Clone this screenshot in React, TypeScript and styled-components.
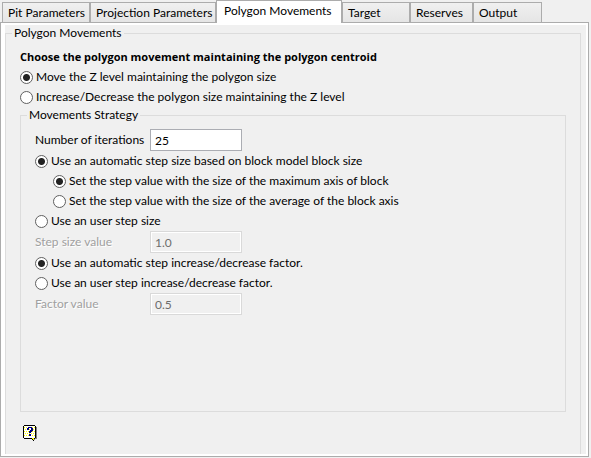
import React, { useState } from "react";
import styled, { createGlobalStyle, css } from "styled-components";

const GlobalStyle = createGlobalStyle`
  * { box-sizing: border-box; }
  body {
    margin: 0;
    background: #f0f0f0;
    color: #000;
    font-family: Lato, "Segoe UI", sans-serif;
    font-size: 12px;
    line-height: 16px;
  }
`;

const Page = styled.main`
  display: flex;
  flex-direction: column;
  min-height: 100vh;
  padding: 0 2px 1px 0;
`;

const TabBar = styled.div`
  display: flex;
  align-items: flex-end;
  height: 23px;
  padding-left: 2px;
  white-space: nowrap;
`;

const Tab = styled.button<{ $active: boolean; $width: number }>`
  flex: 0 0 ${(p) => p.$width}px;
  min-width: 0;
  height: 21px;
  padding: 0 0 0 5px;
  border: 1px solid #acacac;
  background: linear-gradient(#f0f0f0, #e5e5e5);
  font: inherit;
  color: inherit;
  text-align: left;
  ${(p) =>
    p.$active &&
    css`
      z-index: 1;
      height: 23px;
      padding: 0 0 2px 7px;
      border-bottom: 0;
      background: #fff;
    `}
`;

const Panel = styled.div`
  flex: 1;
  display: flex;
  flex-direction: column;
  margin-top: -1px;
  padding: 2px 2px 2px 4px;
  border: 1px solid #acacac;
  background: #fff;
`;

const PanelBody = styled.div`
  flex: 1;
  display: flex;
  flex-direction: column;
  padding-right: 5px;
  background: #f0f0f0;
`;

const Group = styled.fieldset`
  min-width: 0;
  margin: 0;
  padding: 6px 14px 0;
  border: 1px solid #dcdcdc;
`;

const OuterGroup = styled(Group)`
  flex: 1;
  border-bottom: 0;
`;

const InnerGroup = styled(Group)`
  padding-bottom: 96px;
`;

const Legend = styled.legend`
  margin-left: -8px;
  padding: 0 2px;
`;

const Heading = styled.h2`
  margin: 0;
  font-family: "Open Sans", "Segoe UI", sans-serif;
  font-size: 11px;
  font-weight: 700;
  line-height: 20px;
`;

const Option = styled.label<{ $nested?: boolean }>`
  display: flex;
  align-items: center;
  gap: 3px;
  height: 20px;
  padding-left: ${(p) => (p.$nested ? 18 : 0)}px;
  white-space: nowrap;
`;

const Radio = styled.input.attrs({ type: "radio" })`
  appearance: none;
  flex: none;
  width: 13px;
  height: 13px;
  margin: 0;
  border: 1px solid #606060;
  border-radius: 50%;
  background: #fff;
  &:checked {
    background: radial-gradient(circle, #222 0 3px, #fff 4px);
  }
`;

const Field = styled.div`
  display: grid;
  grid-template-columns: 115px 92px;
  align-items: center;
  height: 22px;
`;

const FieldLabel = styled.label<{ $disabled?: boolean }>`
  white-space: nowrap;
  ${(p) =>
    p.$disabled &&
    css`
      color: #a0a0a0;
      text-shadow: 1px 1px 0 #fff;
    `}
`;

const TextBox = styled.input`
  width: 100%;
  height: 22px;
  padding: 0 4px;
  border: 1px solid #abadb3;
  border-radius: 0;
  background: #fff;
  color: #000;
  font: inherit;
  &:disabled {
    border-color: #d9d9d9;
    background: #f0f0f0;
    box-shadow: inset 0 0 0 1px #fff;
    color: #6d6d6d;
  }
`;

const Footer = styled.div`
  display: flex;
  padding: 13px 3px 8px;
`;

const HelpButton = styled.button`
  display: block;
  padding: 0;
  border: 0;
  background: none;
  svg { display: block; }
`;

const dots = Array.from({ length: 11 }, (_, y) =>
  Array.from({ length: 11 }, (_, x) => [x + 1, y + 1]),
)
  .flat()
  .filter(([x, y]) => y % 2 === 0 && (x + y / 2) % 2 === 0);

const HelpIcon = () => (
  <svg width="14" height="16" viewBox="0 0 14 16" shapeRendering="crispEdges" aria-hidden="true">
    <path d="M13 2h1v12h-2v1h-1v1h-1v-2H2v-1h11z" fill="#808080" />
    <path d="M1 0h11v1h1v12h-1v1h-1v2h-1v-1H9v-1H1v-1H0V1h1z" fill="#000" />
    <path d="M1 1h11v12H1z" fill="#fff" />
    {dots.map(([x, y]) => (
      <rect key={`${x}-${y}`} x={x} y={y} width="1" height="1" fill="#ffff00" />
    ))}
    <path d="M1 13h8v1H1zM11 13h1v1h-1z" fill="#000" />
    <path d="M9 13h2v1H9zM10 14h1v1h-1z" fill="#ffff00" />
    <path d="M5 2h4v1h1v3H9v1H8v1H6V6h1V5h1V3H6v2H4V3h1zM6 9h2v2H6z" fill="#000080" />
  </svg>
);

const tabs = [
  { name: "Pit Parameters", width: 88 },
  { name: "Projection Parameters", width: 126 },
  { name: "Polygon Movements", width: 126 },
  { name: "Target", width: 68 },
  { name: "Reserves", width: 63 },
  { name: "Output", width: 69 },
];

type ChoiceProps = {
  name: string;
  label: string;
  value: string;
  selected: string;
  onSelect: (value: string) => void;
  nested?: boolean;
};

const Choice = ({ name, label, value, selected, onSelect, nested }: ChoiceProps) => (
  <Option $nested={nested}>
    <Radio name={name} value={value} checked={selected === value} onChange={() => onSelect(value)} />
    {label}
  </Option>
);

export default function App() {
  const [tab, setTab] = useState("Polygon Movements");
  const [movement, setMovement] = useState("level");
  const [step, setStep] = useState("auto");
  const [axis, setAxis] = useState("max");
  const [factor, setFactor] = useState("auto");

  return (
    <>
      <GlobalStyle />
      <Page>
        <TabBar role="tablist">
          {tabs.map((t) => (
            <Tab
              key={t.name}
              role="tab"
              aria-selected={tab === t.name}
              $active={tab === t.name}
              $width={t.width}
              onClick={() => setTab(t.name)}
            >
              {t.name}
            </Tab>
          ))}
        </TabBar>
        <Panel role="tabpanel">
          <PanelBody>
            <OuterGroup>
              <Legend>Polygon Movements</Legend>
              <Heading>Choose the polygon movement maintaining the polygon centroid</Heading>
              <Choice name="movement" value="level" label="Move the Z level maintaining the polygon size" selected={movement} onSelect={setMovement} />
              <Choice name="movement" value="size" label="Increase/Decrease the polygon size maintaining the Z level" selected={movement} onSelect={setMovement} />
              <InnerGroup>
                <Legend>Movements Strategy</Legend>
                <Field>
                  <FieldLabel htmlFor="iterations">Number of iterations</FieldLabel>
                  <TextBox id="iterations" defaultValue="25" />
                </Field>
                <Choice name="step" value="auto" label="Use an automatic step size based on block model block size" selected={step} onSelect={setStep} />
                <Choice nested name="axis" value="max" label="Set the step value with the size of the maximum axis of block" selected={axis} onSelect={setAxis} />
                <Choice nested name="axis" value="average" label="Set the step value with the size of the average of the block axis" selected={axis} onSelect={setAxis} />
                <Choice name="step" value="user" label="Use an user step size" selected={step} onSelect={setStep} />
                <Field>
                  <FieldLabel htmlFor="step-size" $disabled={step !== "user"}>Step size value</FieldLabel>
                  <TextBox id="step-size" defaultValue="1.0" disabled={step !== "user"} />
                </Field>
                <Choice name="factor" value="auto" label="Use an automatic step increase/decrease factor." selected={factor} onSelect={setFactor} />
                <Choice name="factor" value="user" label="Use an user step increase/decrease factor." selected={factor} onSelect={setFactor} />
                <Field>
                  <FieldLabel htmlFor="factor" $disabled={factor !== "user"}>Factor value</FieldLabel>
                  <TextBox id="factor" defaultValue="0.5" disabled={factor !== "user"} />
                </Field>
              </InnerGroup>
              <Footer>
                <HelpButton type="button" aria-label="Help">
                  <HelpIcon />
                </HelpButton>
              </Footer>
            </OuterGroup>
          </PanelBody>
        </Panel>
      </Page>
    </>
  );
}
